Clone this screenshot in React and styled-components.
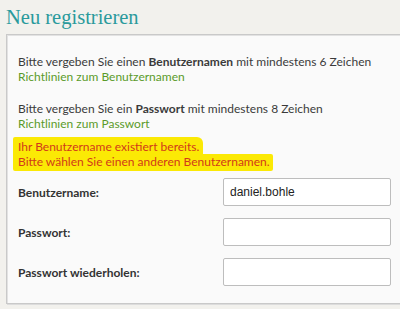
import React from "react";
import styled, { createGlobalStyle } from "styled-components";

const Global = createGlobalStyle`
  html, body { margin: 0; padding: 0; background: #f2f1ed; }
  body { font-family: Lato, "Open Sans", sans-serif; }
`;

const Page = styled.div`
  width: 400px;
  height: 309px;
  overflow: hidden;
  padding: 0 0 0 6px;
  box-sizing: border-box;
`;

const Title = styled.h1`
  margin: 0;
  padding-top: 5px;
  height: 34px;
  box-sizing: border-box;
  font-family: "Liberation Serif", "DejaVu Serif", serif;
  font-weight: normal;
  font-size: 20.5px;
  line-height: 24px;
  color: #2a9a9c;
`;

const Panel = styled.div`
  width: 420px;
  height: 270px;
  box-sizing: border-box;
  background: #fafafa;
  border: 1px solid #c9c9c9;
  box-shadow: inset 1px 1px 0 #e2e2e2, 1px 1px 0 #dcdcdc;
  padding: 19px 0 0 11px;
  font-size: 12px;
  color: #3a3a3a;
`;

const Hint = styled.p`
  margin: 0 0 17px;
  line-height: 15px;
`;

const Link = styled.a`
  display: block;
  color: #5a9a2a;
  text-decoration: none;
`;

const Marker = styled.div`
  margin: -11px 0 7px -5px;
  display: flex;
  flex-direction: column;
  align-items: flex-start;
`;

const MarkLine = styled.span`
  display: inline-block;
  background: #fbe905;
  color: #d2391a;
  line-height: 15px;
  padding: ${(p) => (p.$first ? "2px 4px 0 5px" : "0 3px 2px 5px")};
  border-radius: ${(p) => (p.$first ? "2px 6px 0 0" : "0 2px 2px 2px")};
`;

const Form = styled.div`
  display: grid;
  grid-template-columns: 205px 168px;
  row-gap: 12px;
  align-items: center;
`;

const Label = styled.label`
  font-weight: 700;
  color: #333;
`;

const Input = styled.input`
  height: 28px;
  box-sizing: border-box;
  border: 1px solid #bdbdbd;
  border-radius: 2px;
  background: #fff;
  font-family: "Liberation Sans", Arial, sans-serif;
  font-size: 12px;
  color: #222;
  padding: 0 6px;
  outline: none;
`;

export default function App() {
  return (
    <>
      <Global />
      <Page>
        <Title>Neu registrieren</Title>
        <Panel>
          <Hint>
            Bitte vergeben Sie einen <b>Benutzernamen</b> mit mindestens 6 Zeichen
            <Link href="#">Richtlinien zum Benutzernamen</Link>
          </Hint>
          <Hint>
            Bitte vergeben Sie ein <b>Passwort</b> mit mindestens 8 Zeichen
            <Link href="#">Richtlinien zum Passwort</Link>
          </Hint>
          <Marker>
            <MarkLine $first>Ihr Benutzername existiert bereits.</MarkLine>
            <MarkLine>Bitte wählen Sie einen anderen Benutzernamen.</MarkLine>
          </Marker>
          <Form>
            <Label>Benutzername:</Label>
            <Input defaultValue="daniel.bohle" />
            <Label>Passwort:</Label>
            <Input type="password" />
            <Label>Passwort wiederholen:</Label>
            <Input type="password" />
          </Form>
        </Panel>
      </Page>
    </>
  );
}
